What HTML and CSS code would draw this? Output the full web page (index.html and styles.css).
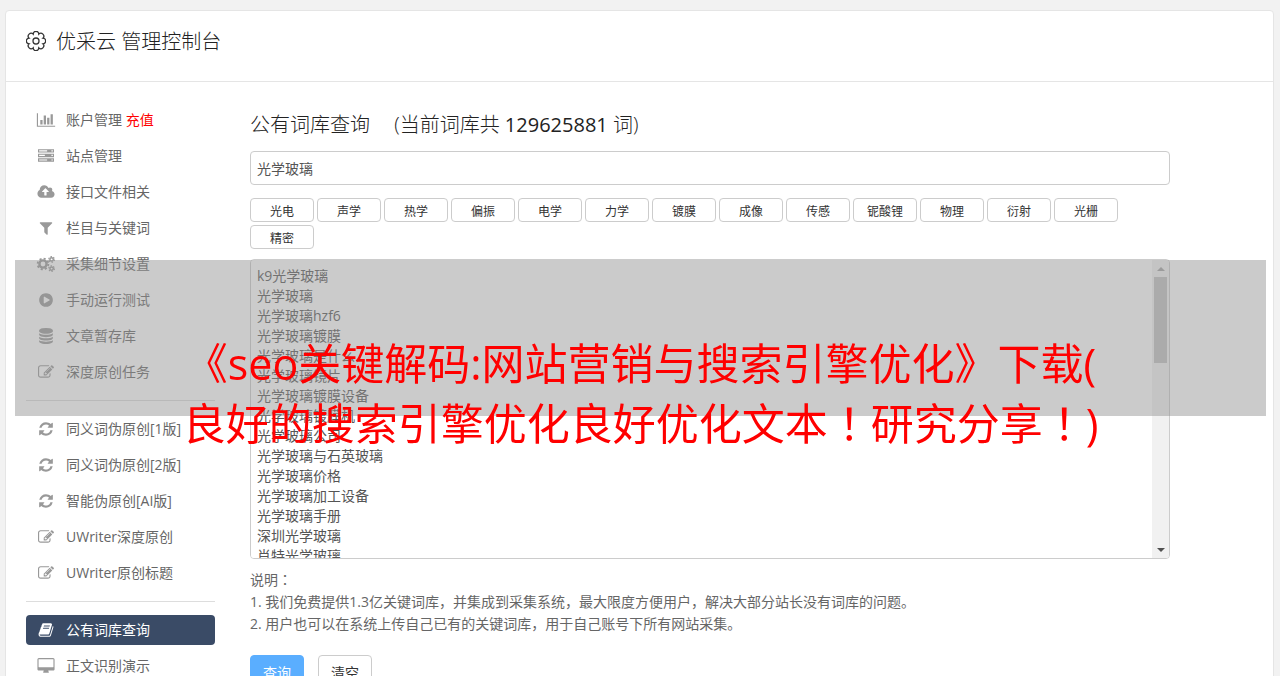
FILE: index.html
```html
<!DOCTYPE html>
<html lang="zh-CN">
<head>
<meta charset="UTF-8" />
<meta name="viewport" content="width=device-width, initial-scale=1" />
<title>优采云 管理控制台</title>
<link rel="stylesheet" href="styles.css">
</head>
<body>
  <!-- shared icon shapes -->
  <svg class="sprite" aria-hidden="true">
    <symbol id="i-chart" viewBox="0 0 2048 1792"><path d="M640 896v512h-256v-512h256zm384-512v1024h-256v-1024h256zm1024 1152v128h-2048v-1536h128v1408h1920zm-640-896v768h-256v-768h256zm384-384v1152h-256v-1152h256z"/></symbol>
    <symbol id="i-server" viewBox="0 0 1792 1792"><path fill-rule="evenodd" d="M0 128h1792v384H0zM128 256v128h896V256zM0 640h1792v384H0zM128 768v128h640V768zM0 1152h1792v384H0zM128 1280v128h896v-128zM1504 256v128h160V256zM1504 768v128h160V768zM1504 1280v128h160v-128z"/></symbol>
    <symbol id="i-cloud" viewBox="0 0 1920 1792"><path d="M1280 864q0-14-9-23l-352-352q-9-9-23-9t-23 9l-351 351q-10 12-10 24 0 14 9 23t23 9h224v352q0 13 9.5 22.5t22.5 9.5h192q13 0 22.5-9.5t9.5-22.5v-352h224q13 0 22.5-9.5t9.5-22.5zm640 288q0 159-112.5 271.5t-271.5 112.5h-1088q-185 0-316.5-131.5t-131.5-316.5q0-130 70-240t188-165q-2-30-2-43 0-212 150-362t362-150q156 0 285.5 87t188.5 231q71-62 166-62 106 0 181 75t75 181q0 76-41 138 130 31 213.5 135.5t83.5 238.5z"/></symbol>
    <symbol id="i-filter" viewBox="0 0 1792 1792"><path d="M1595 295q17 41-14 70l-493 493v742q0 42-39 59-13 5-25 5-27 0-45-19l-256-256q-19-19-19-45v-486l-493-493q-31-29-14-70 17-39 59-39h1280q42 0 59 39z"/></symbol>
    <symbol id="i-cogs" viewBox="0 0 18 16">
      <g fill="none" stroke="currentColor">
        <circle cx="6" cy="8" r="3.6" stroke-width="2.4"/>
        <circle cx="6" cy="8" r="5.4" stroke-width="1.8" stroke-dasharray="2.1 2.14"/>
        <circle cx="14.6" cy="3.4" r="1.7" stroke-width="1.5"/>
        <circle cx="14.6" cy="3.4" r="2.8" stroke-width="1.2" stroke-dasharray="1.5 1.43"/>
        <circle cx="14.6" cy="12.6" r="1.7" stroke-width="1.5"/>
        <circle cx="14.6" cy="12.6" r="2.8" stroke-width="1.2" stroke-dasharray="1.5 1.43"/>
      </g>
    </symbol>
    <symbol id="i-play" viewBox="0 0 1792 1792"><path d="M896 128q209 0 385.5 103t279.5 279.5 103 385.5-103 385.5-279.5 279.5-385.5 103-385.5-103-279.5-279.5-103-385.5 103-385.5 279.5-279.5 385.5-103zm384 823q32-18 32-55t-32-55l-544-320q-31-19-64-1-32 19-32 56v640q0 37 32 56 16 8 32 8 17 0 32-9z"/></symbol>
    <symbol id="i-database" viewBox="0 0 1792 1792"><path d="M896 768q237 0 443-43t325-127v170q0 69-103 128t-280 93.5-385 34.5-385-34.5-280-93.5-103-128v-170q119 84 325 127t443 43zm0 768q237 0 443-43t325-127v170q0 69-103 128t-280 93.5-385 34.5-385-34.5-280-93.5-103-128v-170q119 84 325 127t443 43zm0-384q237 0 443-43t325-127v170q0 69-103 128t-280 93.5-385 34.5-385-34.5-280-93.5-103-128v-170q119 84 325 127t443 43zm0-1152q208 0 385 34.5t280 93.5 103 128v128q0 69-103 128t-280 93.5-385 34.5-385-34.5-280-93.5-103-128v-128q0-69 103-128t280-93.5 385-34.5z"/></symbol>
    <symbol id="i-edit" viewBox="0 0 1792 1792"><path d="M888 1184l116-116-152-152-116 116v56h96v96h56zm440-720q-16-16-33 1l-350 350q-17 17-1 33t33-1l350-350q17-17 1-33zm80 594v190q0 119-84.5 203.5t-203.5 84.5h-832q-119 0-203.5-84.5t-84.5-203.5v-832q0-119 84.5-203.5t203.5-84.5h832q63 0 117 25 15 7 18 23 3 17-9 29l-49 49q-14 14-32 8-23-6-45-6h-832q-66 0-113 47t-47 113v832q0 66 47 113t113 47h832q66 0 113-47t47-113v-126q0-13 9-22l64-64q15-15 35-7t20 29zm-96-738l288 288-672 672h-288v-288zm444 132l-92 92-288-288 92-92q28-28 68-28t68 28l152 152q28 28 28 68t-28 68z"/></symbol>
    <symbol id="i-refresh" viewBox="0 0 1792 1792"><path d="M1639 1056q0 5-1 7-64 268-268 434.5t-478 166.5q-146 0-282.5-55t-243.5-157l-129 129q-19 19-45 19t-45-19-19-45v-448q0-26 19-45t45-19h448q26 0 45 19t19 45-19 45l-137 137q71 66 161 102t187 36q134 0 250-65t186-179q11-17 53-117 8-23 30-23h192q13 0 22.5 9.5t9.5 22.5zm25-800v448q0 26-19 45t-45 19h-448q-26 0-45-19t-19-45 19-45l138-138q-148-137-349-137-134 0-250 65t-186 179q-11 17-53 117-8 23-30 23h-199q-13 0-22.5-9.5t-9.5-22.5v-7q65-268 270-434.5t480-166.5q146 0 284 55.5t245 156.5l130-129q19-19 45-19t45 19 19 45z"/></symbol>
    <symbol id="i-book" viewBox="0 0 1792 1792"><path d="M1703 478q40 57 18 129l-275 906q-19 64-76.5 107.5t-122.5 43.5h-923q-77 0-148.5-53.5t-99.5-131.5q-24-67-2-127 0-4 3-27t4-37q1-8-3-21.5t-3-19.5q2-11 8-21t16.5-23.5 16.5-23.5q23-38 45-91.5t30-91.5q3-10 .5-30t-.5-28q3-11 17-28t17-23q21-36 42-92t25-90q1-9-2.5-32t.5-28q4-13 22-30.5t22-22.5q19-26 42.5-84.5t27.5-96.5q1-8-3-25.5t-2-26.5q2-8 9-18t18-23 17-21q8-12 16.5-30.5t15-35 16-36 19.5-32 26.5-23.5 36-11.5 47.5 5.5l-1 3q38-9 51-9h761q74 0 114 56t18 130l-274 906q-36 119-71.5 153.5t-128.5 34.5h-869q-27 0-38 15-11 16-1 43 24 70 144 70h923q29 0 56-15.5t35-41.5l300-987q7-22 5-57 38 15 59 43zm-1064 2q-4 13 2 22.5t20 9.5h608q13 0 25.5-9.5t16.5-22.5l21-64q4-13-2-22.5t-20-9.5h-608q-13 0-25.5 9.5t-16.5 22.5zm-83 256q-4 13 2 22.5t20 9.5h608q13 0 25.5-9.5t16.5-22.5l21-64q4-13-2-22.5t-20-9.5h-608q-13 0-25.5 9.5t-16.5 22.5z"/></symbol>
    <symbol id="i-desktop" viewBox="0 0 1920 1792"><path d="M1792 992v-832q0-13-9.5-22.5t-22.5-9.5h-1600q-13 0-22.5 9.5t-9.5 22.5v832q0 13 9.5 22.5t22.5 9.5h1600q13 0 22.5-9.5t9.5-22.5zm128-832v1088q0 66-47 113t-113 47h-544q0 37 16 77.5t32 71 16 43.5q0 26-19 45t-45 19h-512q-26 0-45-19t-19-45q0-14 16-44t32-70 16-78h-544q-66 0-113-47t-47-113v-1088q0-66 47-113t113-47h1600q66 0 113 47t47 113z"/></symbol>
  </svg>

  <div class="panel">
    <header class="panel-header">
      <svg class="gear" viewBox="-10 -10 20 20" aria-hidden="true">
        <path d="M-2.8-6.9A2.8 2.8 0 0 1 2.8-6.9A2.8 2.8 0 0 1 6.9-2.8A2.8 2.8 0 0 1 6.9 2.8A2.8 2.8 0 0 1 2.8 6.9A2.8 2.8 0 0 1-2.8 6.9A2.8 2.8 0 0 1-6.9 2.8A2.8 2.8 0 0 1-6.9-2.8A2.8 2.8 0 0 1-2.8-6.9z"/>
        <circle r="3"/>
      </svg>
      <h1>优采云 管理控制台</h1>
    </header>

    <div class="panel-body">
      <nav class="sidebar">
        <a href="#"><svg class="icon"><use href="#i-chart"/></svg><span>账户管理 <em>充值</em></span></a>
        <a href="#"><svg class="icon"><use href="#i-server"/></svg>站点管理</a>
        <a href="#"><svg class="icon"><use href="#i-cloud"/></svg>接口文件相关</a>
        <a href="#"><svg class="icon"><use href="#i-filter"/></svg>栏目与关键词</a>
        <a href="#"><svg class="icon"><use href="#i-cogs"/></svg>采集细节设置</a>
        <a href="#"><svg class="icon"><use href="#i-play"/></svg>手动运行测试</a>
        <a href="#"><svg class="icon"><use href="#i-database"/></svg>文章暂存库</a>
        <a href="#"><svg class="icon"><use href="#i-edit"/></svg>深度原创任务</a>
        <hr>
        <a href="#"><svg class="icon"><use href="#i-refresh"/></svg>同义词伪原创[1版]</a>
        <a href="#"><svg class="icon"><use href="#i-refresh"/></svg>同义词伪原创[2版]</a>
        <a href="#"><svg class="icon"><use href="#i-refresh"/></svg>智能伪原创[AI版]</a>
        <a href="#"><svg class="icon"><use href="#i-edit"/></svg>UWriter深度原创</a>
        <a href="#"><svg class="icon"><use href="#i-edit"/></svg>UWriter原创标题</a>
        <hr>
        <a href="#" class="active"><svg class="icon"><use href="#i-book"/></svg>公有词库查询</a>
        <a href="#"><svg class="icon"><use href="#i-desktop"/></svg>正文识别演示</a>
      </nav>

      <main class="content">
        <h2>公有词库查询 <span class="count">(当前词库共<b> 129625881 </b>词)</span></h2>
        <input type="text" class="keyword" aria-label="关键词" value="光学玻璃">
        <div class="tags">
          <button type="button">光电</button>
          <button type="button">声学</button>
          <button type="button">热学</button>
          <button type="button">偏振</button>
          <button type="button">电学</button>
          <button type="button">力学</button>
          <button type="button">镀膜</button>
          <button type="button">成像</button>
          <button type="button">传感</button>
          <button type="button">铌酸锂</button>
          <button type="button">物理</button>
          <button type="button">衍射</button>
          <button type="button">光栅</button>
          <button type="button">精密</button>
        </div>
        <div class="results">
          <textarea aria-label="查询结果">k9光学玻璃
光学玻璃
光学玻璃hzf6
光学玻璃镀膜
光学玻璃是什么
光学玻璃镜片
光学玻璃镀膜设备
光学玻璃镀膜机
光学玻璃公司
光学玻璃与石英玻璃
光学玻璃价格
光学玻璃加工设备
光学玻璃手册
深圳光学玻璃
肖特光学玻璃</textarea>
          <div class="scrollbar" aria-hidden="true">
            <svg class="arrow up" viewBox="0 0 8 4"><path d="M0 4l4-4 4 4z"/></svg>
            <div class="track"><div class="thumb"></div></div>
            <svg class="arrow down" viewBox="0 0 8 4"><path d="M0 0l4 4 4-4z"/></svg>
          </div>
        </div>
        <div class="notes">
          <p>说明<span class="mark" lang="zh-TW">：</span></p>
          <p>1. 我们免费提供1.3亿关键词库，并集成到采集系统，最大限度方便用户，解决大部分站长没有词库的问题。</p>
          <p>2. 用户也可以在系统上传自己已有的关键词库，用于自己账号下所有网站采集。</p>
        </div>
        <div class="actions">
          <button type="button" class="primary">查询</button>
          <button type="button">清空</button>
        </div>
      </main>
    </div>
  </div>

  <div class="banner">
    <p>《seo关键解码:网站营销与搜索引擎优化》下载(<br>良好的搜索引擎优化良好优化文本<span class="mark" lang="zh-TW">！</span>研究分享<span class="mark" lang="zh-TW">！</span>)</p>
  </div>
</body>
</html>
```
FILE: styles.css
```css
* {
  box-sizing: border-box;
}
html {
  height: 100%;
  overflow: hidden;
}
body {
  position: relative;
  height: 100%;
  margin: 0;
  padding: 10px 6px 0 5px;
  overflow: hidden;
  background: #f2f2f2;
  color: #666;
  font-family: "Open Sans", "Noto Sans CJK SC", sans-serif;
  font-size: 14px;
}
h1, h2, p {
  margin: 0;
}
h1, h2 {
  font-weight: 300;
}
button, input, textarea {
  font-family: inherit;
}
.sprite {
  display: none;
}
/* full-width marks centred in their box */
.mark {
  font-family: "Noto Sans CJK TC", sans-serif;
  line-height: 1;
}

/* Panel */
.panel {
  background: #fff;
  border: 1px solid #e5e5e5;
  border-radius: 4px;
}
.panel-header {
  display: flex;
  align-items: center;
  gap: 10px;
  height: 71px;
  padding: 0 20px 8px;
  border-bottom: 1px solid #e5e5e5;
  color: #222;
}
.panel-header h1 {
  font-size: 20px;
  line-height: 28px;
}
.gear {
  width: 20px;
  height: 20px;
  margin-bottom: 2px;
  fill: none;
  stroke: #333;
  stroke-width: 1.3;
}
.panel-body {
  display: flex;
  gap: 35px;
  padding: 23px 103px 20px 20px;
}

/* Sidebar */
.sidebar {
  display: flex;
  flex: 0 0 189px;
  flex-direction: column;
  gap: 6px;
}
.sidebar a {
  display: flex;
  align-items: center;
  gap: 10px;
  height: 30px;
  padding: 0 10px 2px;
  border-radius: 4px;
  color: #666;
  text-decoration: none;
  white-space: nowrap;
}
.sidebar em {
  color: #f00;
  font-style: normal;
}
.sidebar hr {
  width: 100%;
  margin: 7px 0;
  border: 0;
  border-top: 1px solid #ddd;
}
.sidebar .active {
  background: #3a4b66;
  color: #fff;
}
.icon {
  flex: none;
  width: 20px;
  height: 16px;
  margin-top: 2px;
  color: #999;
  fill: currentColor;
}
.active .icon {
  color: #fff;
}

/* Content */
.content {
  flex: 1;
  min-width: 0;
}
.content h2 {
  margin: 6px 0 12px;
  color: #222;
  font-size: 20px;
  line-height: 28px;
}
.count {
  margin-left: 19px;
}
.count b {
  font-weight: 400;
}
.keyword {
  display: block;
  width: 100%;
  height: 34px;
  padding: 0 6px;
  border: 1px solid #ccc;
  border-radius: 4px;
  color: #555;
  font-size: 14px;
}
.tags {
  display: flex;
  flex-wrap: wrap;
  gap: 3px;
  margin: 13px 0 10px;
}
.tags button {
  width: 64px;
  height: 24px;
  padding: 3px 0 0;
  background: #fff;
  border: 1px solid #ccc;
  border-radius: 4px;
  color: #333;
  font-size: 12px;
  line-height: 20px;
}
.results {
  display: flex;
  height: 300px;
  overflow: hidden;
  border: 1px solid #ccc;
  border-radius: 4px;
}
.results textarea {
  flex: 1;
  min-width: 0;
  padding: 6px 6px 0;
  resize: none;
  border: 0;
  color: #555;
  font-size: 14px;
  line-height: 20px;
}
.scrollbar {
  display: flex;
  flex: 0 0 17px;
  flex-direction: column;
  align-items: center;
  background: #f1f1f1;
}
.arrow {
  width: 8px;
  height: 4px;
  margin: 7px 0 6px;
}
.arrow.up {
  fill: #a3a3a3;
}
.arrow.down {
  fill: #505050;
}
.track {
  flex: 1;
  width: 13px;
}
.thumb {
  height: 86px;
  background: #c1c1c1;
}
.notes {
  margin: 10px 0 20px;
  line-height: 22px;
}
.actions {
  display: flex;
  gap: 14px;
}
.actions button {
  width: 54px;
  height: 34px;
  padding: 0;
  background: #fff;
  border: 1px solid #ccc;
  border-radius: 4px;
  color: #333;
  font-size: 14px;
}
.actions .primary {
  background: #5aaeff;
  border-color: #5aaeff;
  color: #fff;
}

/* Caption laid over the page */
.banner {
  position: absolute;
  top: 260px;
  right: 14px;
  left: 15px;
  height: 156px;
  padding-top: 74px;
  background: rgba(147, 147, 147, 0.48);
  color: #f00;
  font-size: 43px;
  line-height: 60px;
  text-align: center;
  white-space: nowrap;
}
```
